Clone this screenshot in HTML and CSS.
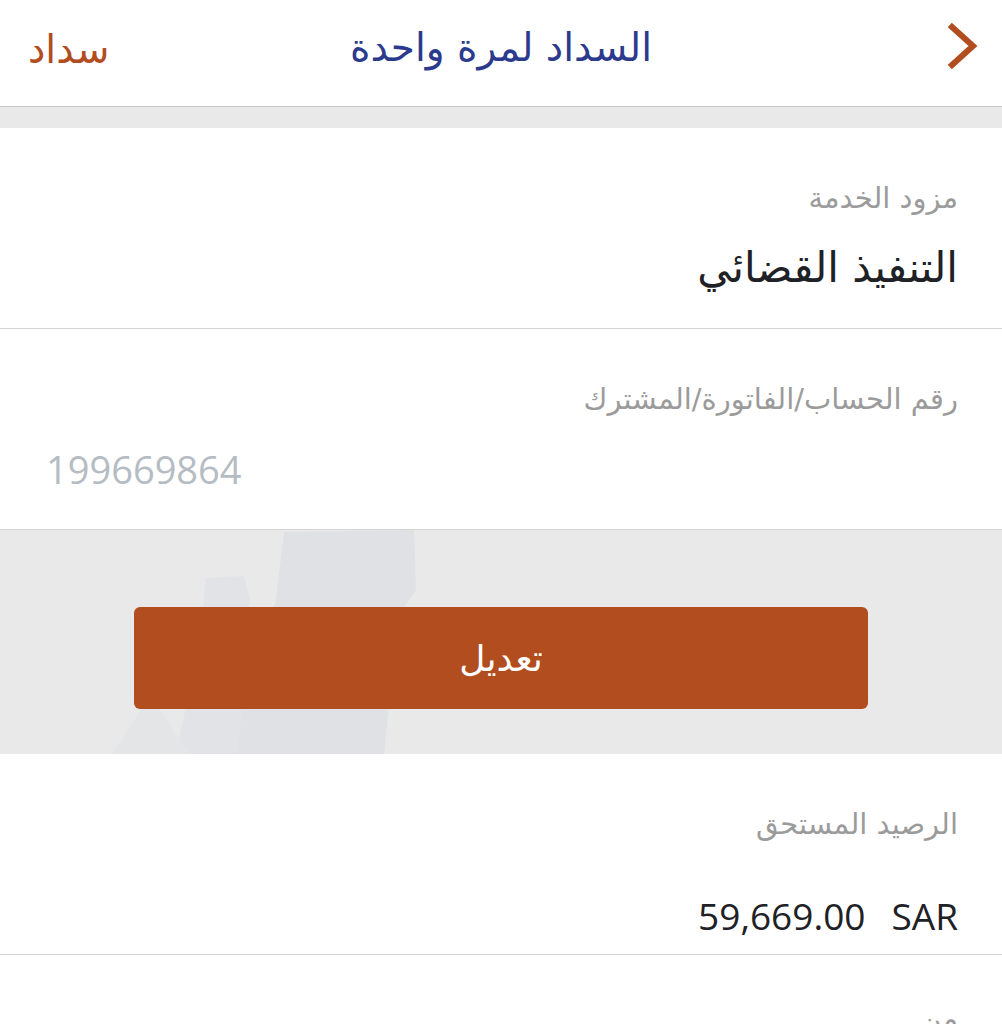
FILE: index.html
```html
<!DOCTYPE html>
<html lang="ar" dir="rtl">
<head>
    <meta charset="UTF-8">
    <meta name="viewport" content="width=device-width, initial-scale=1.0">
    <title>السداد لمرة واحدة</title>
    <link rel="stylesheet" href="styles.css">
</head>
<body>
    <header class="topbar">
        <a class="back" href="#" aria-label="رجوع">
            <svg width="34" height="48" viewBox="0 0 34 48">
                <path d="M6 6 L27 25 L6 44" fill="none" stroke="#b14d1f" stroke-width="6" stroke-linecap="square" stroke-linejoin="miter"/>
            </svg>
        </a>
        <h1 class="title">السداد لمرة واحدة</h1>
        <span class="brand">سداد</span>
    </header>

    <div class="spacer"></div>

    <div class="field">
        <div class="field-label">مزود الخدمة</div>
        <div class="field-value">التنفيذ القضائي</div>
    </div>

    <div class="field">
        <div class="field-label">رقم الحساب/الفاتورة/المشترك</div>
        <div class="field-value number">199669864</div>
    </div>

    <div class="action-band">
        <svg class="band-art" width="1002" height="224" viewBox="0 0 1002 224">
            <polygon points="284,2 414,0 416,60 398,86 384,224 222,224 260,120 276,70" fill="#e0e1e4"/>
            <polygon points="206,48 244,46 250,70 238,224 176,224 198,120" fill="#e2e3e6"/>
            <polygon points="112,224 150,166 190,224" fill="#e4e5e7"/>
        </svg>
        <button class="edit-btn">تعديل</button>
    </div>

    <div class="field">
        <div class="field-label">الرصيد المستحق</div>
        <div class="field-value amount"><span class="currency">SAR</span><span>59,669.00</span></div>
    </div>

    <div class="field last">
        <div class="field-label">من</div>
    </div>
</body>
</html>
```

FILE: styles.css
```css
:root {
    --orange: #b14d1f;
    --blue: #2b3a8c;
    --label: #9b9b9b;
    --text: #1e2125;
    --line: #d4d4d4;
    --band: #e9e9ea;
}

body {
    margin: 0;
    padding: 0;
    width: 1002px;
    background-color: #fff;
    font-family: "DejaVu Sans", "Noto Sans", sans-serif;
    color: var(--text);
    overflow: hidden;
}

.topbar {
    height: 107px;
    box-sizing: border-box;
    border-bottom: 1px solid #c9c9c9;
    display: flex;
    align-items: center;
    justify-content: space-between;
    padding: 0 22px 0 28px;
    position: relative;
}

.back {
    display: flex;
    width: 34px;
    height: 48px;
    margin-top: -16px;
}

.title {
    position: absolute;
    left: 0;
    right: 0;
    top: 0;
    margin: 0;
    line-height: 96px;
    text-align: center;
    font-size: 39px;
    font-weight: normal;
    color: var(--blue);
    pointer-events: none;
}

.brand {
    font-size: 39px;
    color: var(--orange);
    line-height: 96px;
    margin-top: -6px;
}

.spacer {
    height: 21px;
    background-color: var(--band);
}

.field {
    height: 201px;
    box-sizing: border-box;
    padding: 50px 44px 0;
    border-bottom: 1px solid var(--line);
}

.field-label {
    font-size: 29px;
    line-height: 40px;
    color: var(--label);
}

.field-value {
    margin-top: 26px;
    font-size: 42px;
    line-height: 48px;
    color: var(--text);
}

.field-value.number {
    direction: ltr;
    text-align: left;
    padding-left: 2px;
    font-family: "Open Sans", sans-serif;
    font-size: 38px;
    color: #b5bcc3;
}

.field-value.amount {
    direction: rtl;
    display: flex;
    gap: 26px;
    font-family: "Open Sans", sans-serif;
    font-size: 37px;
    margin-top: 48px;
}

.field.last {
    padding-top: 44px;
    border-bottom: none;
}

.action-band {
    position: relative;
    height: 224px;
    box-sizing: border-box;
    padding-top: 77px;
    background-color: var(--band);
    overflow: hidden;
}

.band-art {
    position: absolute;
    left: 0;
    top: 0;
}

.edit-btn {
    position: relative;
    display: block;
    width: 734px;
    height: 102px;
    margin: 0 auto;
    border: none;
    border-radius: 6px;
    background-color: var(--orange);
    color: #fff;
    font-family: inherit;
    font-size: 36px;
    cursor: pointer;
}
```
